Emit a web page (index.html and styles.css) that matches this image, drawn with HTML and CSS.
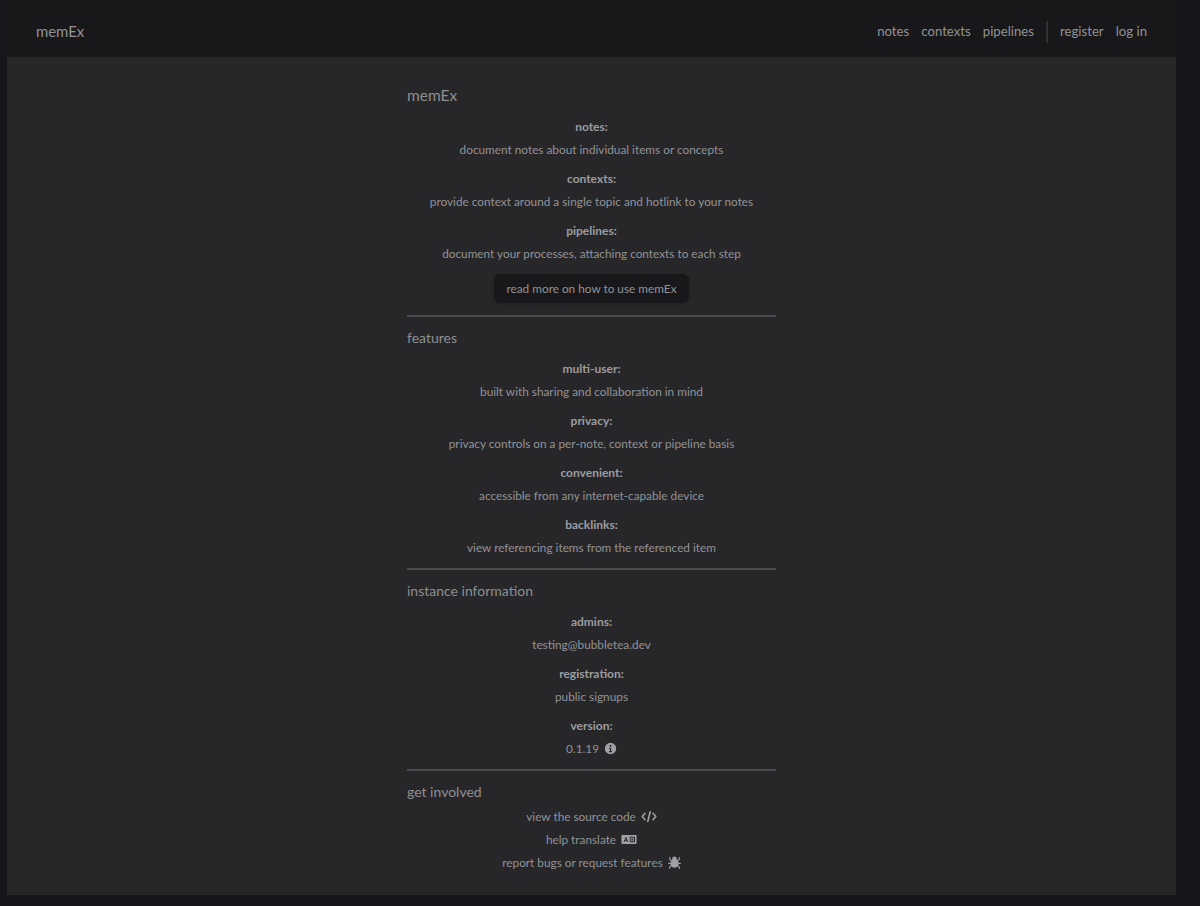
FILE: index.html
```html
<!DOCTYPE html>
<html lang="en">
<head>
  <meta charset="UTF-8">
  <meta name="viewport" content="width=device-width, initial-scale=1.0">
  <title>memEx</title>
  <link rel="stylesheet" href="styles.css">
</head>
<body>
  <nav class="navbar">
    <a class="brand" href="#">memEx</a>
    <div class="nav-links">
      <a href="#">notes</a>
      <a href="#">contexts</a>
      <a href="#">pipelines</a>
      <span class="nav-divider"></span>
      <a href="#">register</a>
      <a href="#">log in</a>
    </div>
  </nav>

  <main class="panel">
    <div class="content">
      <section class="block">
        <h2 class="title">memEx</h2>
        <div class="item"><b>notes:</b><p>document notes about individual items or concepts</p></div>
        <div class="item"><b>contexts:</b><p>provide context around a single topic and hotlink to your notes</p></div>
        <div class="item"><b>pipelines:</b><p>document your processes, attaching contexts to each step</p></div>
        <a class="button" href="#">read more on how to use memEx</a>
      </section>
      <hr>

      <section class="block">
        <h2>features</h2>
        <div class="item"><b>multi-user:</b><p>built with sharing and collaboration in mind</p></div>
        <div class="item"><b>privacy:</b><p>privacy controls on a per-note, context or pipeline basis</p></div>
        <div class="item"><b>convenient:</b><p>accessible from any internet-capable device</p></div>
        <div class="item"><b>backlinks:</b><p>view referencing items from the referenced item</p></div>
      </section>
      <hr>

      <section class="block">
        <h2>instance information</h2>
        <div class="item"><b>admins:</b><p>testing@bubbletea.dev</p></div>
        <div class="item"><b>registration:</b><p>public signups</p></div>
        <div class="item">
          <b>version:</b>
          <p class="with-icon">0.1.19
            <svg class="icon" viewBox="0 0 16 16"><path fill-rule="evenodd" d="M8 1a7 7 0 1 0 0 14A7 7 0 0 0 8 1zM8 3.400a1.200 1.200 0 1 1 0 2.400 1.200 1.200 0 0 1 0-2.400zM6.300 7h2.500v4.100h1v1.400H6.200v-1.400h1.100V8.400h-1z"/></svg>
          </p>
        </div>
      </section>
      <hr>

      <section class="block">
        <h2>get involved</h2>
        <div class="links">
          <a class="with-icon" href="#">view the source code
            <svg class="icon icon-wide" viewBox="0 0 20 16"><path fill="none" stroke="currentColor" stroke-width="2" stroke-linecap="round" stroke-linejoin="round" d="M5 4 1.500 8 5 12M15 4l3.500 4-3.500 4M11.500 2l-3 12"/></svg>
          </a>
          <a class="with-icon" href="#">help translate
            <svg class="icon icon-wide" viewBox="0 0 20 16"><path fill-rule="evenodd" d="M1.500 2.500h17a1 1 0 0 1 1 1v9a1 1 0 0 1-1 1h-17a1 1 0 0 1-1-1v-9a1 1 0 0 1 1-1zM5.800 5 3.200 11h1.300l.4-1h2.400l.4 1H9L6.600 5zM6 6.900l.8 2H5.200zM11 4.500v7h6.500v-7zm1.200 1.200h4v4.600h-4zM13.300 7v2.300h1.800V7z"/></svg>
          </a>
          <a class="with-icon" href="#">report bugs or request features
            <svg class="icon" viewBox="0 0 16 16"><ellipse cx="8" cy="9" rx="5" ry="5.500"/><circle cx="8" cy="3.500" r="2.800"/><path fill="none" stroke="currentColor" stroke-width="1.500" stroke-linecap="round" stroke-linejoin="round" d="M4.500 6 2.500 4.500 2 2M11.500 6l2-1.500.5-2.500M4 9H.8M12 9h3.200M4.500 11.500l-2 1.500-.5 2.200M11.500 11.500l2 1.500.5 2.200"/></svg>
          </a>
        </div>
      </section>
    </div>
  </main>
</body>
</html>
```

FILE: styles.css
```css
* {
  box-sizing: border-box;
}

body {
  margin: 0;
  min-height: 100vh;
  background-color: #16171b;
  color: #929296;
  font-family: Lato, "Open Sans", sans-serif;
  font-size: 11.8px;
  line-height: 19px;
}

a {
  color: inherit;
  text-decoration: none;
}

.navbar {
  display: flex;
  justify-content: space-between;
  align-items: center;
  height: 57px;
  margin: 0 24px 0 7px;
  padding: 6px 29px 0;
  background-color: #18181a;
  font-size: 13.2px;
}

.brand {
  font-size: 14.900px;
}

.nav-links {
  display: flex;
  align-items: center;
  gap: 12px;
}

.nav-divider {
  width: 2px;
  height: 22px;
  background-color: #333336;
}

.panel {
  height: 838px;
  margin: 0 24px 0 7px;
  padding-top: 28px;
  background-color: #27272a;
}

.content {
  width: 369px;
  margin: 0 auto;
}

.block {
  display: flex;
  flex-direction: column;
  align-items: center;
  text-align: center;
}

h2 {
  align-self: flex-start;
  margin: 0 0 10px;
  color: #8e8e92;
  font-size: 14px;
  font-weight: 400;
  line-height: 22px;
}

.title {
  margin: -1px 0 11px;
  font-size: 15.500px;
}

.item {
  display: flex;
  flex-direction: column;
  gap: 4px;
  margin-bottom: 10px;
}

.item b {
  color: #9c9ca0;
  font-size: 12px;
  font-weight: 700;
}

.item p {
  margin: 0;
}

.button {
  margin: 0.500px 0 1px;
  padding: 5px 12px;
  border-radius: 6px;
  background-color: #18181a;
  box-shadow: 0 1px 3px rgba(0, 0, 0, 0.2);
}

hr {
  height: 2px;
  margin: 11px 0 10px;
  border: none;
  background-color: #4b4b4f;
}

.item:last-child {
  margin-bottom: 0;
}

.with-icon {
  display: flex;
  justify-content: center;
  align-items: center;
  gap: 5px;
}

.icon {
  width: 13px;
  height: 13px;
  fill: #a1a1a5;
  color: #a1a1a5;
}

.icon-wide {
  width: 16px;
}

.links {
  display: flex;
  flex-direction: column;
  gap: 4px;
  margin-top: -6px;
}
```
